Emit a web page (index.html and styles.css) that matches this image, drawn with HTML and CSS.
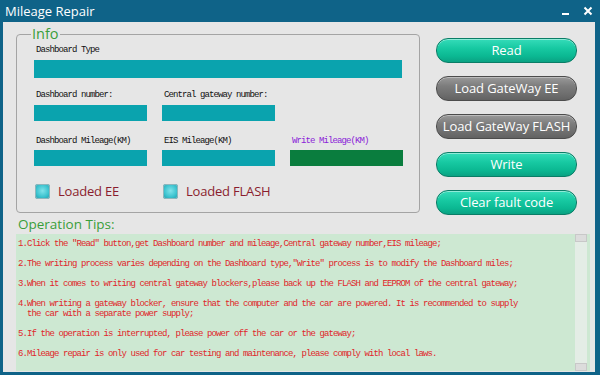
FILE: index.html
```html
<!DOCTYPE html>
<html>
<head>
<meta charset="utf-8">
<link rel="stylesheet" href="styles.css">
</head>
<body>
<div class="window">
  <div class="titlebar">
    <span class="title">Mileage Repair</span>
    <div class="controls">
      <svg class="ctl" width="10" height="10" viewBox="0 0 10 10"><rect x="1" y="7" width="7" height="2" fill="#fff"/></svg>
      <svg class="ctl" width="10" height="10" viewBox="0 0 10 10"><path d="M1.5 1.5 L8.5 8.5 M8.5 1.5 L1.5 8.5" stroke="#fff" stroke-width="2"/></svg>
    </div>
  </div>
  <div class="client">
    <div class="toprow">
      <div class="info">
        <span class="legend">Info</span>
        <div class="lbl lbl-first">Dashboard Type</div>
        <div class="field wide"></div>
        <div class="grid3 row2">
          <div class="lbl">Dashboard number:</div>
          <div class="lbl">Central gateway number:</div>
          <div></div>
          <div class="field small"></div>
          <div class="field small"></div>
          <div></div>
        </div>
        <div class="grid3 row3">
          <div class="lbl">Dashboard Mileage(KM)</div>
          <div class="lbl">EIS Mileage(KM)</div>
          <div class="lbl purple">Write Mileage(KM)</div>
          <div class="field small"></div>
          <div class="field small"></div>
          <div class="field small green"></div>
        </div>
        <div class="grid3 checks">
          <div class="check"><span class="box"></span><span class="ctext">Loaded EE</span></div>
          <div class="check"><span class="box"></span><span class="ctext">Loaded FLASH</span></div>
        </div>
      </div>
      <div class="buttons">
        <div class="btn teal">Read</div>
        <div class="btn gray">Load GateWay EE</div>
        <div class="btn gray">Load GateWay FLASH</div>
        <div class="btn teal">Write</div>
        <div class="btn teal">Clear fault code</div>
      </div>
    </div>
    <div class="tipshead">Operation Tips:</div>
    <div class="tips">
      <div class="tiptext">
        <div class="tip">1.Click the "Read" button,get Dashboard number and mileage,Central gateway number,EIS mileage;</div>
        <div class="tip">2.The writing process varies depending on the Dashboard type,"Write" process is to modify the Dashboard miles;</div>
        <div class="tip">3.When it comes to writing central gateway blockers,please back up the FLASH and EEPROM of the central gateway;</div>
        <div class="tip">4.When writing a gateway blocker, ensure that the computer and the car are powered. It is recommended to supply
  the car with a separate power supply;</div>
        <div class="tip">5.If the operation is interrupted, please power off the car or the gateway;</div>
        <div class="tip">6.Mileage repair is only used for car testing and maintenance, please comply with local laws.</div>
      </div>
      <div class="scrollbar">
        <div class="arrow"></div>
        <div class="track"></div>
        <div class="arrow"></div>
      </div>
    </div>
  </div>
</div>
</body>
</html>
```
FILE: styles.css
```css
* { box-sizing: border-box; }
html, body { margin: 0; padding: 0; }
body { width: 600px; height: 375px; overflow: hidden; background: #0f6388; }
.window {
  width: 600px; height: 375px;
  display: flex; flex-direction: column;
  background: #0f6388;
  font-family: "Open Sans", "Noto Sans", sans-serif;
}
.titlebar {
  height: 22px; flex: none;
  display: flex; align-items: center; justify-content: space-between;
  padding: 0 6px 0 5px;
}
.title { color: #fff; font-size: 13px; }
.controls { display: flex; gap: 12px; align-items: center; padding-right: 1px; }
.ctl { display: block; }
.client {
  flex: 1;
  margin: 0 5px 3px 3px;
  background: #e6e6e6;
  padding: 12px 0 0 13px;
  display: flex; flex-direction: column;
}
.toprow { display: flex; align-items: flex-start; gap: 16px; }
.info {
  position: relative;
  width: 404px; height: 179px;
  padding: 9px 17px 0 17px;
  border: 1px solid #a4a4a4;
  border-radius: 4px;
}
.legend {
  position: absolute;
  top: -10px; left: 14px;
  background: #e6e6e6;
  color: #3a9e3a;
  font-size: 14.5px; line-height: 18px;
  padding: 0 1px;
}
.lbl {
  font-family: "Liberation Mono", monospace;
  font-size: 9px; line-height: 12px;
  letter-spacing: -0.9px;
  color: #111;
  white-space: nowrap;
}
.lbl-first { padding-left: 2px; }
.purple { color: #8a22d8; }
.field { background: #0aa3ae; }
.wide { height: 18px; margin-top: 4px; width: 368px; }
.grid3 {
  display: grid;
  grid-template-columns: 113px 113px 113px;
  column-gap: 15px;
}
.grid3 .lbl { padding-left: 2px; }
.row2 { margin-top: 11px; grid-template-rows: 12px 16px; row-gap: 4px; }
.row3 { margin-top: 14px; grid-template-rows: 12px 16px; row-gap: 3px; }
.small { height: 16px; }
.green { background: #0a7d3e; }
.checks { margin-top: 16px; }
.check { display: flex; align-items: center; gap: 8px; padding-left: 1px; }
.box {
  width: 15px; height: 15px;
  border-radius: 3px;
  background: radial-gradient(circle at 50% 45%, #7fe3ea 0%, #3cc3cf 55%, #1598a8 100%);
  box-shadow: 0 0 0 1px #8fb6bc inset;
}
.ctext { color: #8a1d2e; font-size: 13px; letter-spacing: -0.2px; line-height: 18px; }
.buttons {
  padding-top: 4px;
  display: flex; flex-direction: column; gap: 13.5px;
}
.btn {
  width: 141px; height: 24.5px;
  border-radius: 12px;
  color: #fff;
  font-size: 13px;
  display: flex; align-items: center; justify-content: center;
  letter-spacing: -0.1px;
}
.teal {
  background: linear-gradient(#35dcb9 0%, #17c9a2 40%, #0bb892 75%, #0aa283 100%);
  border: 1px solid #0a7d66;
  box-shadow: inset 0 1px 0 rgba(255,255,255,0.45);
}
.gray {
  background: linear-gradient(#9a9a9a 0%, #7c7c7c 40%, #6e6e6e 75%, #626262 100%);
  border: 1px solid #4c4c4c;
  box-shadow: inset 0 1px 0 rgba(255,255,255,0.35);
}
.tipshead {
  color: #3a9e3a;
  font-size: 13.5px; line-height: 17px;
  margin-top: 1px; padding-left: 2px;
}
.tips {
  margin-top: 1px;
  width: 574px; height: 137px;
  background: #cde8d2;
  display: flex;
}
.tiptext { flex: 1; padding: 5px 0 0 2px; }
.tip {
  font-family: "Liberation Mono", monospace;
  font-size: 9px; line-height: 10px;
  letter-spacing: -0.9px;
  color: #e0262a;
  white-space: pre;
  margin-bottom: 10px;
}
.scrollbar {
  width: 12px; margin-right: 3px;
  display: flex; flex-direction: column;
  background: #e4ede6;
}
.arrow { height: 8px; background: #dcdcdc; border: 1px solid #c8c8c8; }
.track { flex: 1; }
```
